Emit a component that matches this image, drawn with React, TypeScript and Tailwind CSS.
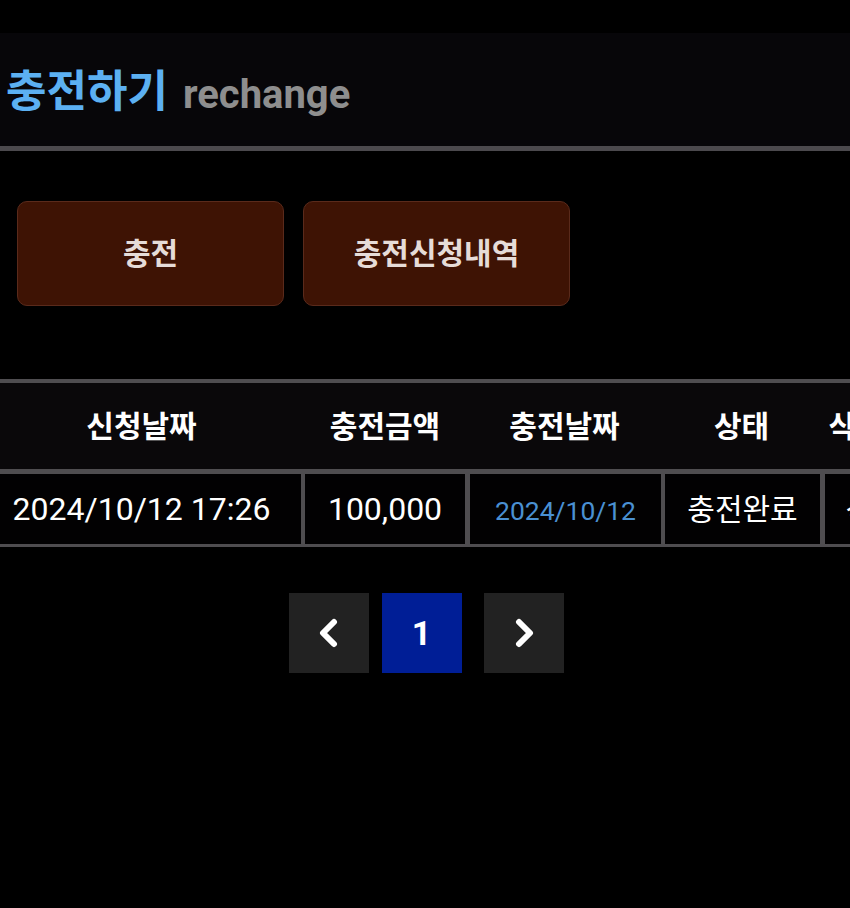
import React from 'react';

const font = { fontFamily: "Roboto, 'Noto Sans CJK KR', sans-serif" };

const columns = [
  { label: '신청날짜', width: 'w-[319px]' },
  { label: '충전금액', width: 'w-[160px]' },
  { label: '충전날짜', width: 'w-[191px]' },
  { label: '상태', width: 'w-[155px]' },
  { label: '삭제', width: 'w-[66px]' },
];

const Chevron: React.FC<{ dir: 'left' | 'right' }> = ({ dir }) => (
  <svg width="26" height="30" viewBox="0 0 26 30" fill="none">
    <path
      d={dir === 'left' ? 'M18 4 L7 15 L18 26' : 'M8 4 L19 15 L8 26'}
      stroke="white"
      strokeWidth="6"
      strokeLinecap="round"
      strokeLinejoin="round"
    />
  </svg>
);

export default function App() {
  return (
    <div className="min-h-[908px] w-[850px] overflow-hidden bg-black text-white" style={font}>
      <div className="h-[33px] bg-black" />

      {/* page title */}
      <header className="flex h-[118px] items-center border-b-[5px] border-[#4b494d] bg-[#070609] pl-[6px] pt-[4px]">
        <h1 className="text-[44px] font-bold leading-none text-[#5cb0f2]">충전하기</h1>
        <span className="ml-[15px] mt-[6px] text-[40px] font-bold leading-none text-[#8e8e8e]">rechange</span>
      </header>

      {/* tabs */}
      <div className="flex gap-[19px] pl-[17px] pt-[50px]">
        {['충전', '충전신청내역'].map((label) => (
          <button
            key={label}
            className="flex h-[105px] w-[267px] items-center justify-center rounded-[10px] border border-[#5a2a1b] bg-[#3e1304] text-[30px] font-bold text-[#e6dcd8]"
          >
            {label}
          </button>
        ))}
      </div>

      {/* history table */}
      <div className="mt-[73px] -ml-[18px] w-[1000px]">
        <div className="flex h-[95px] items-center border-t-4 border-b-[5px] border-[#4f4d50] bg-[#0a080a]">
          {columns.map((c, i) => (
            <div
              key={c.label}
              className={`${c.width} shrink-0 whitespace-nowrap text-center text-[30px] font-bold ${i > 0 ? 'ml-[4px]' : ''}`}
            >
              {c.label}
            </div>
          ))}
        </div>
        <div className="flex h-[73px] border-b-[3px] border-[#4f4d50] bg-[#020102]">
          <div className="flex w-[319px] shrink-0 items-center justify-center text-[32px]">2024/10/12 17:26</div>
          <div className="flex w-[164px] shrink-0 items-center justify-center border-l-4 border-[#4f4d50] text-[32px]">
            100,000
          </div>
          <div className="flex w-[196px] shrink-0 items-center justify-center border-l-[5px] border-[#4f4d50] pt-[3px] text-[26.5px] text-[#4a90d2]">
            2024/10/12
          </div>
          <div className="flex w-[159px] shrink-0 items-center justify-center border-l-4 border-[#4f4d50] text-[30px]">
            충전완료
          </div>
          <div className="flex w-[101px] shrink-0 items-center justify-center whitespace-nowrap border-l-[5px] border-[#4f4d50] text-[30px]">
            삭제
          </div>
        </div>
      </div>

      {/* pagination */}
      <div className="mt-[46px] flex justify-center pl-[2px]">
        <button className="flex h-[80px] w-[80px] items-center justify-center bg-[#222222]">
          <Chevron dir="left" />
        </button>
        <button className="ml-[13px] flex h-[80px] w-[80px] items-center justify-center bg-[#001e96] text-[34px] font-bold">
          1
        </button>
        <button className="ml-[22px] flex h-[80px] w-[80px] items-center justify-center bg-[#222222]">
          <Chevron dir="right" />
        </button>
      </div>
    </div>
  );
}
